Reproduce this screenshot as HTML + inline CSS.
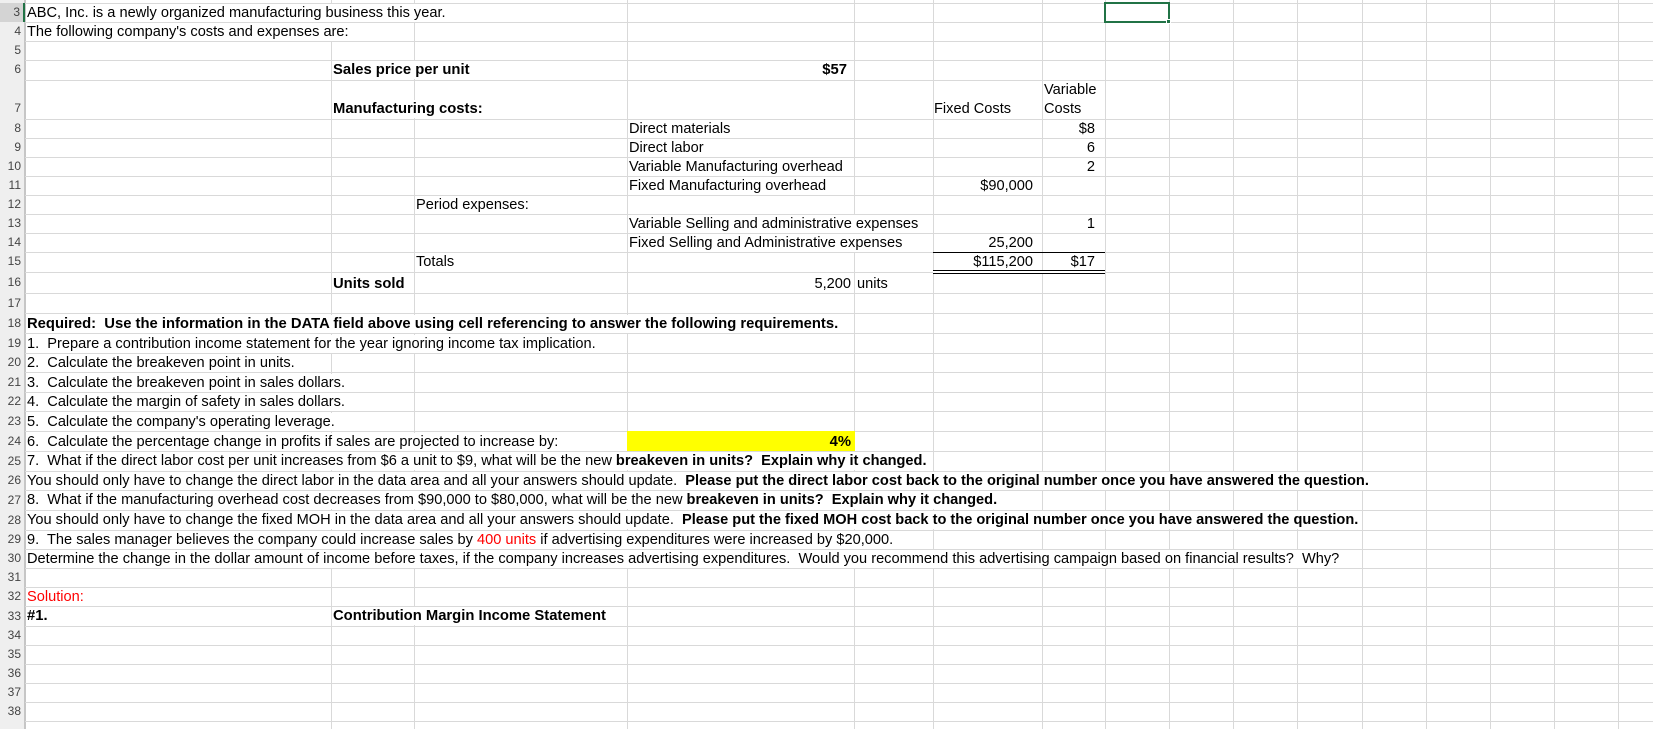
<!DOCTYPE html>
<html><head><meta charset="utf-8"><style>
*{margin:0;padding:0;box-sizing:border-box}
body{width:1653px;height:729px;overflow:hidden;background:#fff;position:relative;font-family:"Liberation Sans",Arial,sans-serif;font-size:14.6px;color:#000}
.h{position:absolute;left:25px;right:0;height:1px;background:#d9d9d9}
.v{position:absolute;top:0;height:729px;width:1px;background:#d9d9d9}
.t{position:absolute;background:#fff;white-space:pre;line-height:18px;padding-right:1px}
.r{position:absolute;white-space:pre;line-height:18px;text-align:right}
.b{font-weight:bold;font-size:14.8px}
.red{color:#f00}
.hd{position:absolute;left:0;width:25px;background:#efefef;border-right:1px solid #c6c6c6;font-size:12px;color:#444;text-align:right;padding-right:3px;line-height:19px}
</style></head><body>
<div class="hd" style="top:0;height:729px"></div>
<div class="v" style="left:25px;background:#c6c6c6"></div>
<div class="v" style="left:331px"></div><div class="v" style="left:414px"></div><div class="v" style="left:627px"></div><div class="v" style="left:854px"></div><div class="v" style="left:933px"></div><div class="v" style="left:1042px"></div><div class="v" style="left:1105px"></div><div class="v" style="left:1169px"></div><div class="v" style="left:1233px"></div><div class="v" style="left:1297px"></div><div class="v" style="left:1362px"></div><div class="v" style="left:1426px"></div><div class="v" style="left:1490px"></div><div class="v" style="left:1554px"></div><div class="v" style="left:1618px"></div>

<div class="h" style="top:3px"></div><div class="h" style="top:22px"></div><div class="h" style="top:41px"></div><div class="h" style="top:60px"></div><div class="h" style="top:80px"></div><div class="h" style="top:119px"></div><div class="h" style="top:138px"></div><div class="h" style="top:157px"></div><div class="h" style="top:176px"></div><div class="h" style="top:195px"></div><div class="h" style="top:214px"></div><div class="h" style="top:233px"></div><div class="h" style="top:252px"></div><div class="h" style="top:272px"></div><div class="h" style="top:293px"></div><div class="h" style="top:313px"></div><div class="h" style="top:333px"></div><div class="h" style="top:353px"></div><div class="h" style="top:372px"></div><div class="h" style="top:392px"></div><div class="h" style="top:411px"></div><div class="h" style="top:431px"></div><div class="h" style="top:451px"></div><div class="h" style="top:471px"></div><div class="h" style="top:490px"></div><div class="h" style="top:510px"></div><div class="h" style="top:530px"></div><div class="h" style="top:549px"></div><div class="h" style="top:568px"></div><div class="h" style="top:587px"></div><div class="h" style="top:606px"></div><div class="h" style="top:626px"></div><div class="h" style="top:645px"></div><div class="h" style="top:664px"></div><div class="h" style="top:683px"></div><div class="h" style="top:702px"></div><div class="h" style="top:721px"></div>

<div class="hd" style="top:3px;height:19px;background:#d4d4d4;border-right:2px solid #217346">3</div>
<div class="hd" style="top:22px">4</div><div class="hd" style="top:41px">5</div><div class="hd" style="top:60px">6</div>
<div class="hd" style="top:99px">7</div><div class="hd" style="top:119px">8</div><div class="hd" style="top:138px">9</div><div class="hd" style="top:157px">10</div><div class="hd" style="top:176px">11</div><div class="hd" style="top:195px">12</div><div class="hd" style="top:214px">13</div><div class="hd" style="top:233px">14</div><div class="hd" style="top:252px">15</div><div class="hd" style="top:273px">16</div><div class="hd" style="top:294px">17</div><div class="hd" style="top:314px">18</div><div class="hd" style="top:334px">19</div><div class="hd" style="top:353px">20</div><div class="hd" style="top:373px">21</div><div class="hd" style="top:392px">22</div><div class="hd" style="top:412px">23</div><div class="hd" style="top:432px">24</div><div class="hd" style="top:452px">25</div><div class="hd" style="top:471px">26</div><div class="hd" style="top:491px">27</div><div class="hd" style="top:511px">28</div><div class="hd" style="top:530px">29</div><div class="hd" style="top:549px">30</div><div class="hd" style="top:568px">31</div><div class="hd" style="top:587px">32</div><div class="hd" style="top:607px">33</div><div class="hd" style="top:626px">34</div><div class="hd" style="top:645px">35</div><div class="hd" style="top:664px">36</div><div class="hd" style="top:683px">37</div><div class="hd" style="top:702px">38</div>

<div style="position:absolute;left:1104px;top:2px;width:66px;height:21px;border:2px solid #217346"></div>
<div style="position:absolute;left:1166px;top:19px;width:5px;height:5px;background:#217346;border:1px solid #fff"></div>

<div class="t" style="left:27px;top:4px">ABC, Inc. is a newly organized manufacturing business this year.</div>
<div class="t" style="left:27px;top:23px">The following company's costs and expenses are:</div>
<div class="t b" style="left:333px;top:61px">Sales price per unit</div>
<div class="r b" style="right:806px;top:61px">$57</div>
<div class="t b" style="left:333px;top:100px">Manufacturing costs:</div>
<div class="t" style="left:934px;top:100px">Fixed Costs</div>
<div class="t" style="left:1044px;top:81px;line-height:19px">Variable<br>Costs</div>
<div class="t" style="left:629px;top:120px">Direct materials</div><div class="r" style="right:558px;top:120px">$8</div>
<div class="t" style="left:629px;top:139px">Direct labor</div><div class="r" style="right:558px;top:139px">6</div>
<div class="t" style="left:629px;top:158px">Variable Manufacturing overhead</div><div class="r" style="right:558px;top:158px">2</div>
<div class="t" style="left:629px;top:177px">Fixed Manufacturing overhead</div><div class="r" style="right:620px;top:177px">$90,000</div>
<div class="t" style="left:416px;top:196px">Period expenses:</div>
<div class="t" style="left:629px;top:215px">Variable Selling and administrative expenses</div><div class="r" style="right:558px;top:215px">1</div>
<div class="t" style="left:629px;top:234px">Fixed Selling and Administrative expenses</div><div class="r" style="right:620px;top:234px">25,200</div>
<div style="position:absolute;left:933px;top:252px;width:172px;height:1px;background:#000"></div>
<div class="t" style="left:416px;top:253px">Totals</div><div class="r" style="right:620px;top:253px">$115,200</div><div class="r" style="right:558px;top:253px">$17</div>
<div style="position:absolute;left:933px;top:270px;width:172px;height:4px;border-top:1px solid #000;border-bottom:1px solid #000;background:#fff"></div>
<div class="t b" style="left:333px;top:275px">Units sold</div>
<div class="r" style="right:802px;top:275px">5,200</div><div class="t" style="left:857px;top:275px">units</div>

<div class="t b" style="left:27px;top:315px">Required:  Use the information in the DATA field above using cell referencing to answer the following requirements.</div>
<div class="t" style="left:27px;top:335px">1.  Prepare a contribution income statement for the year ignoring income tax implication.</div>
<div class="t" style="left:27px;top:354px">2.  Calculate the breakeven point in units.</div>
<div class="t" style="left:27px;top:374px">3.  Calculate the breakeven point in sales dollars.</div>
<div class="t" style="left:27px;top:393px">4.  Calculate the margin of safety in sales dollars.</div>
<div class="t" style="left:27px;top:413px">5.  Calculate the company's operating leverage.</div>
<div class="t" style="left:27px;top:433px">6.  Calculate the percentage change in profits if sales are projected to increase by:</div>
<div style="position:absolute;left:627px;top:431px;width:228px;height:20px;background:#ff0"></div>
<div class="r b" style="right:802px;top:433px">4%</div>
<div class="t" style="left:27px;top:452px">7.  What if the direct labor cost per unit increases from $6 a unit to $9, what will be the new <b>breakeven in units?  Explain why it changed.</b></div>
<div class="t" style="left:27px;top:472px">You should only have to change the direct labor in the data area and all your answers should update.  <b>Please put the direct labor cost back to the original number once you have answered the question.</b></div>
<div class="t" style="left:27px;top:491px">8.  What if the manufacturing overhead cost decreases from $90,000 to $80,000, what will be the new <b>breakeven in units?  Explain why it changed.</b></div>
<div class="t" style="left:27px;top:511px">You should only have to change the fixed MOH in the data area and all your answers should update.  <b>Please put the fixed MOH cost back to the original number once you have answered the question.</b></div>
<div class="t" style="left:27px;top:531px">9.  The sales manager believes the company could increase sales by <span class="red">400 units</span> if advertising expenditures were increased by $20,000.</div>
<div class="t" style="left:27px;top:550px">Determine the change in the dollar amount of income before taxes, if the company increases advertising expenditures.  Would you recommend this advertising campaign based on financial results?  Why?</div>
<div class="t red" style="left:27px;top:588px">Solution:</div>
<div class="t b" style="left:27px;top:607px">#1.</div>
<div class="t b" style="left:333px;top:607px">Contribution Margin Income Statement</div>
</body></html>
